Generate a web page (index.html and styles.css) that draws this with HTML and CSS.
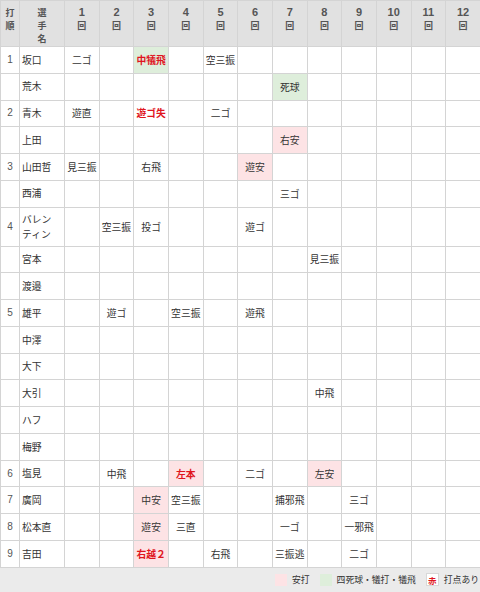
FILE: index.html
```html
<!DOCTYPE html>
<html lang="ja">
<head>
<meta charset="utf-8">
<link rel="stylesheet" href="styles.css">
</head>
<body>
<div class="page">
<table class="score">
<colgroup>
<col class="c-order"><col class="c-name">
<col class="c-inn"><col class="c-inn"><col class="c-inn"><col class="c-inn"><col class="c-inn"><col class="c-inn">
<col class="c-inn"><col class="c-inn"><col class="c-inn"><col class="c-inn"><col class="c-inn"><col class="c-inn">
</colgroup>
<thead>
<tr>
<th>打<br>順</th><th>選<br>手<br>名</th>
<th><span class="num">1</span><br>回</th><th><span class="num">2</span><br>回</th><th><span class="num">3</span><br>回</th><th><span class="num">4</span><br>回</th><th><span class="num">5</span><br>回</th><th><span class="num">6</span><br>回</th>
<th><span class="num">7</span><br>回</th><th><span class="num">8</span><br>回</th><th><span class="num">9</span><br>回</th><th><span class="num">10</span><br>回</th><th><span class="num">11</span><br>回</th><th><span class="num">12</span><br>回</th>
</tr>
</thead>
<tbody>
<tr><td class="ord">1</td><td class="name">坂口</td><td>二ゴ</td><td></td><td class="walk rbi">中犠飛</td><td></td><td>空三振</td><td></td><td></td><td></td><td></td><td></td><td></td><td></td></tr>
<tr><td class="ord"></td><td class="name">荒木</td><td></td><td></td><td></td><td></td><td></td><td></td><td class="walk">死球</td><td></td><td></td><td></td><td></td><td></td></tr>
<tr><td class="ord">2</td><td class="name">青木</td><td>遊直</td><td></td><td class="rbi">遊ゴ失</td><td></td><td>二ゴ</td><td></td><td></td><td></td><td></td><td></td><td></td><td></td></tr>
<tr><td class="ord"></td><td class="name">上田</td><td></td><td></td><td></td><td></td><td></td><td></td><td class="hit">右安</td><td></td><td></td><td></td><td></td><td></td></tr>
<tr><td class="ord">3</td><td class="name">山田哲</td><td>見三振</td><td></td><td>右飛</td><td></td><td></td><td class="hit">遊安</td><td></td><td></td><td></td><td></td><td></td><td></td></tr>
<tr><td class="ord"></td><td class="name">西浦</td><td></td><td></td><td></td><td></td><td></td><td></td><td>三ゴ</td><td></td><td></td><td></td><td></td><td></td></tr>
<tr class="tall"><td class="ord">4</td><td class="name">バレン<br>ティン</td><td></td><td>空三振</td><td>投ゴ</td><td></td><td></td><td>遊ゴ</td><td></td><td></td><td></td><td></td><td></td><td></td></tr>
<tr><td class="ord"></td><td class="name">宮本</td><td></td><td></td><td></td><td></td><td></td><td></td><td></td><td>見三振</td><td></td><td></td><td></td><td></td></tr>
<tr><td class="ord"></td><td class="name">渡邉</td><td></td><td></td><td></td><td></td><td></td><td></td><td></td><td></td><td></td><td></td><td></td><td></td></tr>
<tr><td class="ord">5</td><td class="name">雄平</td><td></td><td>遊ゴ</td><td></td><td>空三振</td><td></td><td>遊飛</td><td></td><td></td><td></td><td></td><td></td><td></td></tr>
<tr><td class="ord"></td><td class="name">中澤</td><td></td><td></td><td></td><td></td><td></td><td></td><td></td><td></td><td></td><td></td><td></td><td></td></tr>
<tr><td class="ord"></td><td class="name">大下</td><td></td><td></td><td></td><td></td><td></td><td></td><td></td><td></td><td></td><td></td><td></td><td></td></tr>
<tr><td class="ord"></td><td class="name">大引</td><td></td><td></td><td></td><td></td><td></td><td></td><td></td><td>中飛</td><td></td><td></td><td></td><td></td></tr>
<tr><td class="ord"></td><td class="name">ハフ</td><td></td><td></td><td></td><td></td><td></td><td></td><td></td><td></td><td></td><td></td><td></td><td></td></tr>
<tr><td class="ord"></td><td class="name">梅野</td><td></td><td></td><td></td><td></td><td></td><td></td><td></td><td></td><td></td><td></td><td></td><td></td></tr>
<tr><td class="ord">6</td><td class="name">塩見</td><td></td><td>中飛</td><td></td><td class="hit rbi">左本</td><td></td><td>二ゴ</td><td></td><td class="hit">左安</td><td></td><td></td><td></td><td></td></tr>
<tr><td class="ord">7</td><td class="name">廣岡</td><td></td><td></td><td class="hit">中安</td><td>空三振</td><td></td><td></td><td>捕邪飛</td><td></td><td>三ゴ</td><td></td><td></td><td></td></tr>
<tr><td class="ord">8</td><td class="name">松本直</td><td></td><td></td><td class="hit">遊安</td><td>三直</td><td></td><td></td><td>一ゴ</td><td></td><td>一邪飛</td><td></td><td></td><td></td></tr>
<tr><td class="ord">9</td><td class="name">吉田</td><td></td><td></td><td class="hit rbi">右越２</td><td></td><td>右飛</td><td></td><td>三振逃</td><td></td><td>二ゴ</td><td></td><td></td><td></td></tr>
</tbody>
</table>
<div class="legend">
<span class="sw sw-hit"></span><span class="lbl">安打</span>
<span class="sw sw-walk"></span><span class="lbl">四死球・犠打・犠飛</span>
<span class="sw sw-rbi">赤</span><span class="lbl last">打点あり</span>
</div>
</div>
</body>
</html>
```

FILE: styles.css
```css
html, body {
  margin: 0;
  padding: 0;
  background: #ebebeb;
}
body {
  font-family: "Noto Sans CJK JP", "Noto Sans", sans-serif;
  font-size: 9.8px;
  color: #333;
}
.page {
  width: 480px;
}
.score {
  width: 480px;
  table-layout: fixed;
  border-collapse: collapse;
  background: #fff;
}
.c-order { width: 19px; }
.c-name { width: 45px; }
.c-inn { width: 34.67px; }
.score th, .score td {
  border: 1px solid #d4d4d4;
  padding: 0;
  text-align: center;
  line-height: 14px;
  overflow: hidden;
  white-space: nowrap;
}
.score thead th {
  background: #e1e1e1;
  vertical-align: top;
  padding-top: 5px;
  height: 46px;
  box-sizing: border-box;
  font-weight: bold;
  font-size: 9px;
  line-height: 13px;
  color: #555;
}
.score thead th .num {
  font-family: "Liberation Sans", "Noto Sans", sans-serif;
  font-size: 11px;
}
.score tbody tr {
  height: 26.78px;
}
.score tbody tr.tall {
  height: 39px;
}
.score td.ord {
  font-family: "Liberation Sans", "Noto Sans", sans-serif;
  font-size: 10px;
  color: #555;
}
.score td.name {
  text-align: left;
  padding-left: 2px;
  line-height: 14.5px;
}
.score td.hit {
  background: #fde3e5;
}
.score td.walk {
  background: #deeedb;
}
.score td.rbi {
  color: #e0161e;
  font-weight: bold;
}
.legend {
  height: 24px;
  display: flex;
  align-items: center;
  justify-content: flex-end;
  font-size: 8.8px;
  color: #333;
}
.sw {
  width: 12px;
  height: 12px;
  box-sizing: border-box;
  margin-right: 5px;
  display: inline-flex;
  align-items: center;
  justify-content: center;
}
.sw-hit { background: #fde3e5; }
.sw-walk { background: #deeedb; }
.sw-rbi {
  background: #fff;
  border: 1px solid #d8d8d8;
  color: #e0161e;
  font-size: 8.5px;
  font-weight: bold;
  width: 13px;
  height: 13px;
}
.lbl {
  margin-right: 10px;
}
.lbl.last {
  margin-right: 1px;
}
```
